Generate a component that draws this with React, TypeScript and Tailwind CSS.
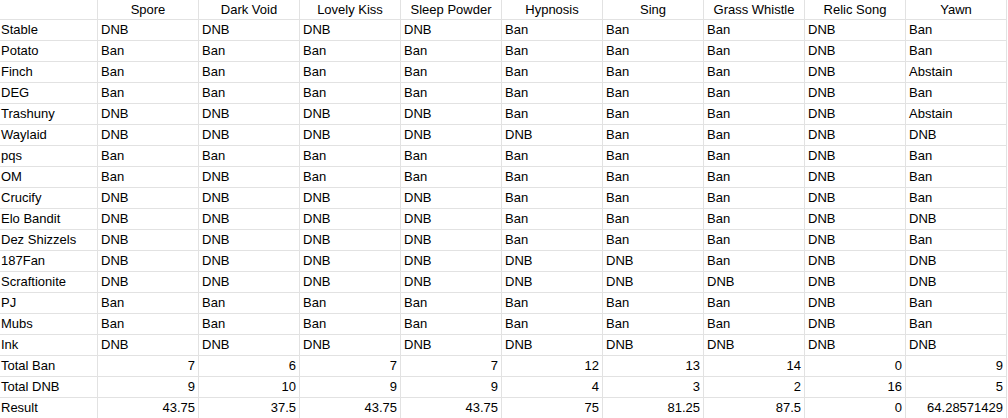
const columns = [
  'Spore',
  'Dark Void',
  'Lovely Kiss',
  'Sleep Powder',
  'Hypnosis',
  'Sing',
  'Grass Whistle',
  'Relic Song',
  'Yawn',
];

const votes: [string, string[]][] = [
  ['Stable', ['DNB', 'DNB', 'DNB', 'DNB', 'Ban', 'Ban', 'Ban', 'DNB', 'Ban']],
  ['Potato', ['Ban', 'Ban', 'Ban', 'Ban', 'Ban', 'Ban', 'Ban', 'DNB', 'Ban']],
  ['Finch', ['Ban', 'Ban', 'Ban', 'Ban', 'Ban', 'Ban', 'Ban', 'DNB', 'Abstain']],
  ['DEG', ['Ban', 'Ban', 'Ban', 'Ban', 'Ban', 'Ban', 'Ban', 'DNB', 'Ban']],
  ['Trashuny', ['DNB', 'DNB', 'DNB', 'DNB', 'Ban', 'Ban', 'Ban', 'DNB', 'Abstain']],
  ['Waylaid', ['DNB', 'DNB', 'DNB', 'DNB', 'DNB', 'Ban', 'Ban', 'DNB', 'DNB']],
  ['pqs', ['Ban', 'Ban', 'Ban', 'Ban', 'Ban', 'Ban', 'Ban', 'DNB', 'Ban']],
  ['OM', ['Ban', 'DNB', 'Ban', 'Ban', 'Ban', 'Ban', 'Ban', 'DNB', 'Ban']],
  ['Crucify', ['DNB', 'DNB', 'DNB', 'DNB', 'Ban', 'Ban', 'Ban', 'DNB', 'Ban']],
  ['Elo Bandit', ['DNB', 'DNB', 'DNB', 'DNB', 'Ban', 'Ban', 'Ban', 'DNB', 'DNB']],
  ['Dez Shizzels', ['DNB', 'DNB', 'DNB', 'DNB', 'Ban', 'Ban', 'Ban', 'DNB', 'Ban']],
  ['187Fan', ['DNB', 'DNB', 'DNB', 'DNB', 'DNB', 'DNB', 'Ban', 'DNB', 'DNB']],
  ['Scraftionite', ['DNB', 'DNB', 'DNB', 'DNB', 'DNB', 'DNB', 'DNB', 'DNB', 'DNB']],
  ['PJ', ['Ban', 'Ban', 'Ban', 'Ban', 'Ban', 'Ban', 'Ban', 'DNB', 'Ban']],
  ['Mubs', ['Ban', 'Ban', 'Ban', 'Ban', 'Ban', 'Ban', 'Ban', 'DNB', 'Ban']],
  ['Ink', ['DNB', 'DNB', 'DNB', 'DNB', 'DNB', 'DNB', 'DNB', 'DNB', 'DNB']],
];

const totals: [string, string[]][] = [
  ['Total Ban', ['7', '6', '7', '7', '12', '13', '14', '0', '9']],
  ['Total DNB', ['9', '10', '9', '9', '4', '3', '2', '16', '5']],
  ['Result', ['43.75', '37.5', '43.75', '43.75', '75', '81.25', '87.5', '0', '64.28571429']],
];

const cell = 'shrink-0 border-r border-b border-[#e2e2e2] whitespace-nowrap overflow-hidden';

function Row({
  label,
  values,
  numeric,
}: {
  label: string;
  values: string[];
  numeric?: boolean;
}) {
  return (
    <div className="flex h-[21px] leading-[20px]">
      <div className={`${cell} w-[98px] pl-px`}>{label}</div>
      {values.map((v, i) => (
        <div
          key={i}
          className={`${cell} w-[101px] ${numeric ? 'text-right pr-[3px]' : 'pl-[3px]'}`}
        >
          {v}
        </div>
      ))}
    </div>
  );
}

export default function App() {
  return (
    <div
      className="w-[1008px] h-[418px] overflow-hidden bg-white text-[13px] text-black"
      style={{ fontFamily: '"Liberation Sans", Arial, sans-serif' }}
    >
      {/* header */}
      <div className="flex h-[20px] leading-[19px]">
        <div className={`${cell} w-[98px]`} />
        {columns.map((c) => (
          <div key={c} className={`${cell} w-[101px] text-center`}>
            {c}
          </div>
        ))}
      </div>

      {votes.map(([name, vals]) => (
        <Row key={name} label={name} values={vals} />
      ))}

      {totals.map(([name, vals]) => (
        <Row key={name} label={name} values={vals} numeric />
      ))}
    </div>
  );
}
